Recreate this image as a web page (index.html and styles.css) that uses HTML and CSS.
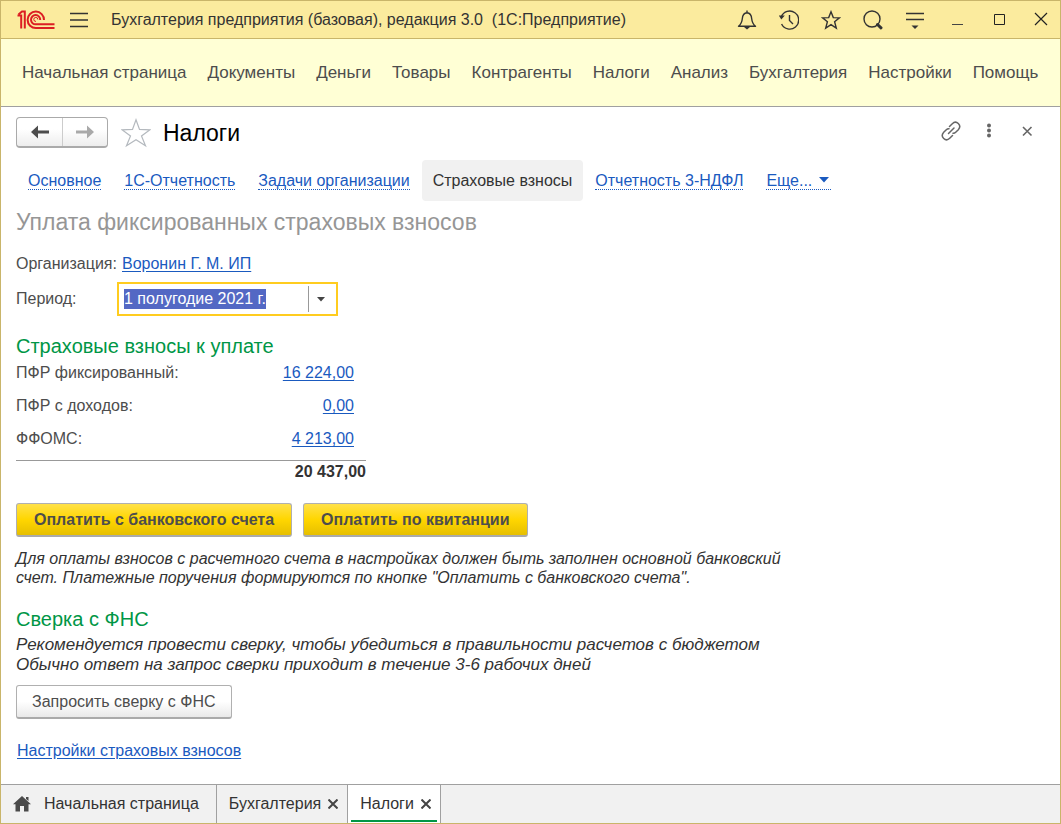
FILE: index.html
```html
<!DOCTYPE html>
<html lang="ru">
<head>
<meta charset="utf-8">
<meta name="viewport" content="width=device-width, initial-scale=1">
<title>Налоги</title>
<link rel="stylesheet" href="styles.css">
</head>
<body>
<div class="window">
  <header class="titlebar">
    <svg class="logo" width="38" height="20" viewBox="0 0 38 20" fill="none" stroke="#dc1e23" stroke-width="2" aria-label="1С">
      <path d="M.5 5.500H4.200V18.500M1.500 4.500L5 1.500H7.800V18.500"/>
      <path d="M27 10A8.200 8.200 0 1 0 19 18H37.500M23.200 10A4.600 4.600 0 1 0 19 14.300H37.500"/>
      <path d="M20.800 9.500a2 2 0 1 0-1.800 1.900" stroke-width="1"/>
    </svg>
    <button class="icon-button burger" aria-label="Меню">
      <svg width="18" height="16" viewBox="0 0 18 16" stroke="#333" stroke-width="1.4"><path d="M0 1.5h18M0 8h18M0 14.5h18"/></svg>
    </button>
    <div class="app-title">Бухгалтерия предприятия (базовая), редакция 3.0&nbsp; (1С:Предприятие)</div>
    <div class="tools">
      <button class="icon-button" aria-label="Уведомления">
        <svg width="20" height="20" viewBox="0 0 20 20" fill="none" stroke="#333" stroke-width="1.4" stroke-linejoin="round"><path d="M1.500 16.300c2.900-2.200 3.500-4.500 3.800-7.500C5.600 5.200 7 3 10 2.800c3 .2 4.400 2.400 4.700 6 .3 3 .9 5.300 3.800 7.500zM10 .5v2"/><path d="M7 17h6L10 19.500z" fill="#333" stroke="none"/></svg>
      </button>
      <button class="icon-button" aria-label="История">
        <svg width="20" height="20" viewBox="0 0 20 20" fill="none" stroke="#333" stroke-width="1.4"><path d="M2.300 6.800A9 9 0 1 1 2.600 14"/><path d="M10.500 5v5.500l3.500 3.500"/><path d="M-.2 5.500h6L2.300 9.500z" fill="#333" stroke="none"/></svg>
      </button>
      <button class="icon-button" aria-label="Избранное">
        <svg width="20" height="20" viewBox="0 0 20 20" fill="none" stroke="#333" stroke-width="1.4"><path d="M10 1.800l2.300 5.800 6.200.3-4.900 3.900 1.700 6.300L10 14.600l-5.300 3.500 1.700-6.300L1.500 7.900l6.200-.3z"/></svg>
      </button>
      <button class="icon-button" aria-label="Поиск">
        <svg width="20" height="20" viewBox="0 0 20 20" fill="none" stroke="#333"><circle cx="9" cy="9" r="8" stroke-width="1.400"/><path d="M14.500 14.500l3.500 3.300" stroke-width="3" stroke-linecap="round"/></svg>
      </button>
      <button class="icon-button" aria-label="Настройка">
        <svg width="20" height="20" viewBox="0 0 20 20" stroke="#333" stroke-width="1.400"><path d="M1 3.500h18M1 9.500h18"/><path d="M6.500 15.500h7L10 19z" fill="#333" stroke="none"/></svg>
      </button>
      <button class="icon-button" aria-label="Свернуть">
        <svg width="20" height="20" viewBox="0 0 20 20" stroke="#444" stroke-width="1"><path d="M5 14.500h11"/></svg>
      </button>
      <button class="icon-button" aria-label="Развернуть">
        <svg width="20" height="20" viewBox="0 0 20 20" fill="none" stroke="#222" stroke-width="1"><path d="M5.500 4.500h10v10h-10z"/></svg>
      </button>
      <button class="icon-button" aria-label="Закрыть">
        <svg width="20" height="20" viewBox="0 0 20 20" stroke="#222" stroke-width="1.200"><path d="M4 3l12 12M16 3L4 15"/></svg>
      </button>
    </div>
  </header>

  <nav class="menu">
    <a href="#">Начальная страница</a>
    <a href="#">Документы</a>
    <a href="#">Деньги</a>
    <a href="#">Товары</a>
    <a href="#">Контрагенты</a>
    <a href="#">Налоги</a>
    <a href="#">Анализ</a>
    <a href="#">Бухгалтерия</a>
    <a href="#">Настройки</a>
    <a href="#">Помощь</a>
  </nav>

  <main class="page">
    <div class="page-head">
      <div class="history">
        <button class="step" aria-label="Назад"><svg width="18" height="14" viewBox="0 0 18 14" fill="#4d4d4d"><path d="M0 7l7-6.500v5h11v3H7v5z"/></svg></button>
        <button class="step" aria-label="Вперед"><svg width="18" height="14" viewBox="0 0 18 14" fill="#a9a9a9"><path d="M18 7l-7-6.500v5H0v3h11v5z"/></svg></button>
      </div>
      <button class="icon-button" aria-label="В избранное">
        <svg width="30" height="30" viewBox="0 0 30 30" fill="none" stroke="#b4b9be" stroke-width="1.200"><path d="M15 1.800l3.500 9.600 10.500.4-8.500 6.100 4 9.800L15 21.800l-9.500 5.900 4-9.800L1 11.800l10.500-.4z"/></svg>
      </button>
      <h1 class="page-title">Налоги</h1>
      <div class="page-tools">
        <button class="icon-button" aria-label="Ссылка">
          <svg width="20" height="20" viewBox="0 0 20 20" fill="none" stroke="#666" stroke-width="1.500" stroke-linecap="round"><path d="M7.500 12.500l5.500-5.500"/><path d="M8.500 5.500l2.800-2.800c4-4 10 1.500 6 6l-2.600 2.600c-.8.800-1.700 1.100-2.700 1"/><path d="M11.500 14.500l-2.800 2.800c-4 4-10-1.500-6-6l2.600-2.600c.8-.8 1.700-1.100 2.700-1"/></svg>
        </button>
        <button class="icon-button" aria-label="Ещё">
          <svg width="20" height="20" viewBox="0 0 20 20" fill="#666"><circle cx="10" cy="4.500" r="2"/><circle cx="10" cy="9.500" r="2"/><circle cx="10" cy="14.500" r="2"/></svg>
        </button>
        <button class="icon-button" aria-label="Закрыть">
          <svg width="20" height="20" viewBox="0 0 20 20" stroke="#666" stroke-width="1.600"><path d="M6 6l8.500 8.500M14.500 6L6 14.500"/></svg>
        </button>
      </div>
    </div>

    <nav class="sections">
      <a class="section" href="#"><span>Основное</span></a>
      <a class="section" href="#"><span>1С-Отчетность</span></a>
      <a class="section" href="#"><span>Задачи организации</span></a>
      <a class="section current" href="#" aria-current="page"><span>Страховые взносы</span></a>
      <a class="section" href="#"><span>Отчетность 3-НДФЛ</span></a>
      <a class="section" href="#"><span>Еще... <svg class="caret" width="10" height="6" viewBox="0 0 10 6" fill="#1a5abf"><path d="M0 0h10L5 5.500z"/></svg></span></a>
    </nav>

    <h2 class="form-title">Уплата фиксированных страховых взносов</h2>

    <div class="fields">
      <span>Организация:</span>
      <a class="link organisation" href="#">Воронин Г. М. ИП</a>
      <label for="period">Период:</label>
      <div class="combo">
        <input id="period" type="text" value="1 полугодие 2021 г.">
        <button class="drop" aria-label="Выбрать период"><svg width="8" height="5" viewBox="0 0 8 5" fill="#444"><path d="M0 0h8L4 4.500z"/></svg></button>
      </div>
    </div>

    <h3 class="group-title">Страховые взносы к уплате</h3>
    <table class="amounts">
      <tbody>
        <tr><th scope="row">ПФР фиксированный:</th><td><a class="link" href="#">16 224,00</a></td></tr>
        <tr><th scope="row">ПФР с доходов:</th><td><a class="link" href="#">0,00</a></td></tr>
        <tr><th scope="row">ФФОМС:</th><td><a class="link" href="#">4 213,00</a></td></tr>
      </tbody>
      <tfoot>
        <tr><td colspan="2">20 437,00</td></tr>
      </tfoot>
    </table>

    <div class="actions">
      <button class="button primary">Оплатить с банковского счета</button>
      <button class="button primary">Оплатить по квитанции</button>
    </div>
    <p class="hint">Для оплаты взносов с расчетного счета в настройках должен быть заполнен основной банковский<br>счет. Платежные поручения формируются по кнопке "Оплатить с банковского счета".</p>

    <h3 class="group-title">Сверка с ФНС</h3>
    <p class="note">Рекомендуется провести сверку, чтобы убедиться в правильности расчетов с бюджетом<br>Обычно ответ на запрос сверки приходит в течение 3-6 рабочих дней</p>
    <div class="request"><button class="button">Запросить сверку с ФНС</button></div>
    <a class="link settings" href="#">Настройки страховых взносов</a>
  </main>

  <footer class="tabs">
    <a class="tab home" href="#">
      <svg width="18" height="16" viewBox="0 0 18 16" fill="#4a4a4a"><path d="M9 0l9 8.300h-2.500V15.500H11V10H7v5.500H2.500V8.300H0z"/><path d="M13 1h2.500v4L13 3z"/></svg>
      Начальная страница
    </a>
    <div class="tab">
      <a href="#">Бухгалтерия</a>
      <button class="icon-button" aria-label="Закрыть Бухгалтерия"><svg width="10" height="10" viewBox="0 0 10 10" stroke="#444" stroke-width="2"><path d="M.5 .5l9 9M9.500 .5l-9 9"/></svg></button>
    </div>
    <div class="tab active">
      <a href="#">Налоги</a>
      <button class="icon-button" aria-label="Закрыть Налоги"><svg width="10" height="10" viewBox="0 0 10 10" stroke="#444" stroke-width="2"><path d="M.5 .5l9 9M9.500 .5l-9 9"/></svg></button>
    </div>
  </footer>
</div>
<script src="script.js"></script>
</body>
</html>
```
FILE: styles.css
```css
* { box-sizing: border-box; }

body {
  margin: 0;
  background: #fff;
  color: #4d4d4d;
  font: 16px/20px "Liberation Sans", Arial, sans-serif;
}

a { color: inherit; text-decoration: none; }
button, input { font: inherit; color: inherit; }
svg { display: block; }
h1, h2, h3, p { margin: 0; font-weight: normal; }

.window {
  display: flex;
  flex-direction: column;
  min-height: 100vh;
  border: 1px solid #c9b56a;
}

.icon-button {
  display: flex;
  align-items: center;
  justify-content: center;
  padding: 0;
  border: 0;
  background: none;
}

.titlebar {
  display: flex;
  align-items: center;
  height: 38px;
  padding: 0 9px 0 16px;
  background: #fbeb9e;
  border-bottom: 1px solid #c9b56a;
  color: #333;
}
.burger { margin: 0 23px 0 15px; }
.app-title { flex: 1; white-space: nowrap; }
.tools { display: flex; gap: 22px; }

.menu {
  display: flex;
  align-items: center;
  gap: 21px;
  height: 68px;
  padding: 0 21px;
  background: #ffffd5;
  border-bottom: 1px solid #a0a0a0;
  font-size: 17px;
  white-space: nowrap;
}

.page { flex: 1; padding: 10px 15px 23px; }

.page-head { display: flex; align-items: center; height: 31px; }
.history {
  display: flex;
  height: 31px;
  margin-right: 13px;
  border: 1px solid #aaa;
  border-bottom: 2px solid #aaa;
  border-radius: 4px;
  background: linear-gradient(#fff 40%, #ededed);
}
.step {
  display: flex;
  align-items: center;
  justify-content: center;
  width: 45px;
  padding: 0;
  border: 0;
  background: none;
}
.step + .step { border-left: 1px solid #ccc; }
.page-title { margin-left: 12px; color: #000; font-size: 23px; line-height: 28px; }
.page-tools { display: flex; gap: 18px; margin: 0 8px 4px auto; }

.sections { display: flex; gap: 1px; margin-top: 12px; padding-left: 1px; }
.section {
  display: flex;
  align-items: center;
  height: 41px;
  padding: 1px 11px 0;
  border-radius: 4px;
  color: #1a5abf;
  white-space: nowrap;
}
.section span { border-bottom: 1px dotted #1a5abf; line-height: 16px; }
.section.current { background: #f1f1f1; color: #333; }
.section.current span { border-color: transparent; }
.caret { display: inline-block; margin: 0 2px 3px; }

.form-title { margin-top: 6px; color: #969696; font-size: 23px; line-height: 30px; }

.fields {
  display: grid;
  grid-template-columns: 101px 221px;
  align-items: center;
  row-gap: 8px;
  margin-top: 17px;
}
.link { color: #1a5abf; text-decoration: underline; text-underline-offset: 2px; }
.organisation { margin-left: 5px; }

.combo {
  display: flex;
  align-items: center;
  height: 34px;
  border: 2px solid #ffcc1f;
  background: #fff;
}
.combo input {
  flex: 1;
  min-width: 0;
  padding: 0 5px;
  border: 0;
  outline: 0;
  background: none;
}
.combo input::selection { background: #5368c4; color: #fff; }
.drop {
  display: flex;
  align-items: center;
  justify-content: center;
  width: 28px;
  height: 26px;
  padding: 0 4px 0 0;
  border: 0;
  border-left: 1px solid #999;
  background: none;
}

.group-title { margin-top: 18px; color: #009646; font-size: 20px; line-height: 24px; }

.amounts { width: 350px; margin-top: 3px; border-collapse: collapse; }
.amounts th, .amounts td { height: 33px; padding: 2px 0 0; vertical-align: top; }
.amounts th { font-weight: normal; text-align: left; }
.amounts td { padding-right: 12px; text-align: right; }
.amounts tfoot td {
  height: 24px;
  padding: 1px 0 0;
  border-top: 1px solid #999;
  color: #333;
  font-weight: bold;
}

.actions { display: flex; gap: 11px; margin-top: 19px; }
.button {
  height: 34px;
  padding: 0 15px;
  border: 1px solid #b0b0b0;
  border-bottom: 2px solid #aaa;
  border-radius: 3px;
  background: linear-gradient(#fff 50%, #e9e9e9);
}
.button.primary {
  padding: 0 17px;
  background: linear-gradient(#ffe14a, #ffd600 50%, #e6bf00);
  font-weight: bold;
}

.hint, .note { color: #333; font-style: italic; }
.hint { margin: 12px 0 20px; line-height: 19px; }
.note { margin-top: 4px; font-size: 17px; }
.request { margin: 10px 0 22px; }
.settings { margin-left: 1px; }

.tabs {
  display: flex;
  height: 39px;
  background: #f1f1f1;
  border-top: 1px solid #a0a0a0;
  color: #333;
}
.tab {
  display: flex;
  align-items: center;
  gap: 7px;
  padding: 0 9px 0 12px;
  border-right: 1px solid #a0a0a0;
  white-space: nowrap;
}
.tab.home { gap: 13px; padding-right: 17px; }
.tab.active {
  position: relative;
  background: #fff;
}
.tab.active::after {
  content: "";
  position: absolute;
  right: 3px;
  bottom: 1px;
  left: 3px;
  height: 2px;
  background: #009646;
}
```
FILE: script.js
```js
const period = document.getElementById("period");
period.focus();
period.select();
```
